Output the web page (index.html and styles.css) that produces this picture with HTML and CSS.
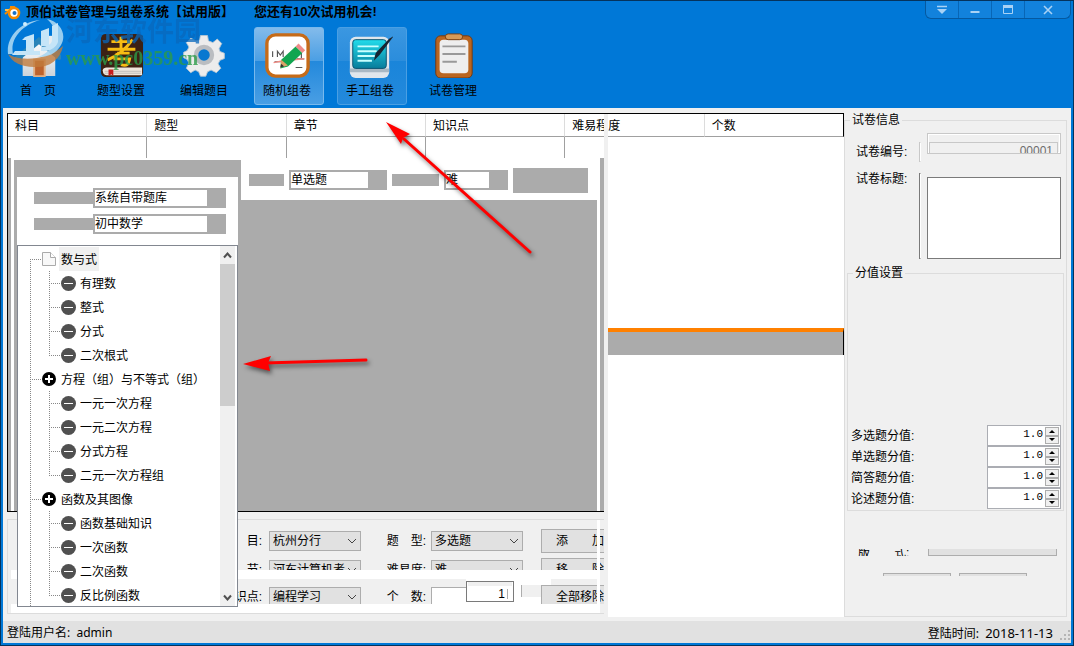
FILE: index.html
```html
<!DOCTYPE html>
<html lang="zh-CN">
<head>
<meta charset="utf-8">
<title>顶伯试卷管理与组卷系统</title>
<link rel="stylesheet" href="styles.css">
</head>
<body>
<div class="window">
  <header class="top">
    <div class="titlebar">
      <svg class="app-icon" width="17" height="16" viewBox="0 0 17 16"><path d="M1 10 9 3 6 3" fill="none" stroke="#f58a00" stroke-width="2"/><path d="M1 6h7" stroke="#ffc04a" stroke-width="2"/><circle cx="10" cy="9" r="5" fill="#fff" stroke="#f58a00" stroke-width="2.6"/><circle cx="10.500" cy="9" r="2" fill="#1671c9"/></svg>
      <h1>顶伯试卷管理与组卷系统【试用版】</h1>
      <p class="trial">您还有10次试用机会!</p>
      <div class="controls">
        <button aria-label="菜单"><svg width="12" height="10" viewBox="0 0 12 10"><path d="M1 1.500h10" stroke="#a9d2f5" stroke-width="1.500"/><path d="M1 4h10L6 9z" fill="#a9d2f5"/></svg></button>
        <button aria-label="最小化"><svg width="12" height="10" viewBox="0 0 12 10"><path d="M1.500 7h9" stroke="#a9d2f5" stroke-width="2"/></svg></button>
        <button aria-label="最大化"><svg width="12" height="10" viewBox="0 0 12 10"><path d="M1.500 1.500h9v7h-9z" fill="none" stroke="#a9d2f5"/><path d="M1 1.500h10" stroke="#a9d2f5" stroke-width="3"/></svg></button>
        <button class="close" aria-label="关闭"><svg width="12" height="10" viewBox="0 0 12 10"><path d="m2 1 8 8M10 1 2 9" stroke="#a9d2f5" stroke-width="1.600"/></svg></button>
      </div>
    </div>
    <nav class="toolbar">
      <button class="tool"><svg viewBox="0 0 48 48"><defs><linearGradient id="hw" x2="0" y2="1"><stop offset="0" stop-color="#fff"/><stop offset="1" stop-color="#ccd3da"/></linearGradient></defs><path d="M33 4h7v14h-7z" fill="#e8edf1"/><path d="M8 23 25 9l17 14v23H8z" fill="url(#hw)"/><path d="M3 27 25 9l21 17" fill="none" stroke="#2a84b8" stroke-width="6" stroke-linecap="round"/><path d="M20 29h11v17H20z" fill="#bd632c" stroke="#e1ae82" stroke-width="2"/></svg><span>首　页</span></button>
      <button class="tool"><svg viewBox="0 0 48 48"><rect x="3" y="2" width="44" height="45" rx="5" fill="#3c2114"/><path d="M5 40c0-2 2-3 4-3h37v8H9c-3 0-4-2-4-5z" fill="#eee6dc"/><path d="M7 41h38M7 43h38" stroke="#aaa" stroke-width=".7"/><path d="M11 39h5v7l-2-2-3 2z" fill="#c51d1d"/><path d="M14 10h20M24 5v13M10 18h29M36 8C29 18 20 25 10 29M20 22h13M20 22l-2 6h15c-1 6-3 8-9 6" fill="none" stroke="#f8bd13" stroke-width="3"/></svg><span>题型设置</span></button>
      <button class="tool"><svg viewBox="-2 -1 52 52"><path d="M20 3h8l1 6 5 2 5-4 5 5-3 6 1 3 5 2v6l-5 2-2 4 3 5-5 5-6-3-4 2-2 5h-6l-2-5-4-2-5 3-5-5 3-6-2-4-4-2v-6l4-2 2-4-3-5 5-5 6 3 4-1z" fill="#ececec" stroke="#b8c6d2"/><circle cx="24" cy="25" r="9" fill="#0878d0" stroke="#babdc1" stroke-width="5"/></svg><span>编辑题目</span></button>
      <button class="tool selected"><svg viewBox="0 0 48 48"><rect x="3" y="3" width="43" height="43" rx="9" fill="#fff" stroke="#c66b18" stroke-width="3.500"/><path d="M9 20v6M14 26v-6l3 4 3-4v6M39 22v5M11 31h8m15-3h8M33 37h7" stroke="#555" stroke-width="1.200" fill="none"/><path d="m10 32 10-2 22-2" stroke="#f38a83" stroke-width="1.500" fill="none"/><path d="m18 29 15-14 7 7-15 14-8 2z" fill="#12a550"/><path d="m33 15 3-3 7 7-3 3z" fill="#ef8b88"/><path d="m18 29 7 6-8 2z" fill="#dba268"/><path d="m18 33-1 4 4-1z" fill="#333"/></svg><span>随机组卷</span></button>
      <button class="tool hover"><svg viewBox="0 0 48 48"><defs><linearGradient id="pad" x2="0" y2="1"><stop offset="0" stop-color="#22dceb"/><stop offset="1" stop-color="#087c9b"/></linearGradient></defs><rect x="3" y="5" width="41" height="43" rx="6" fill="#dfe6ec"/><path d="M3 38h41v4H3z" fill="#a8b8c4"/><rect x="6" y="8" width="35" height="30" rx="3" fill="url(#pad)" stroke="#08526f"/><path d="M11 15h22M11 20h20M11 25h18M11 30h15" stroke="#c7ffff" stroke-width="2"/><path d="M49 4 34 24l-6 6 2-8L44 7z" fill="#172532"/></svg><span>手工组卷</span></button>
      <button class="tool"><svg viewBox="0 0 48 48"><rect x="6" y="4" width="38" height="44" rx="5" fill="#b96520" stroke="#713710"/><rect x="10" y="8" width="30" height="35" rx="4" fill="#eee"/><rect x="16" y="2" width="18" height="6" rx="3" fill="#d69a58" stroke="#793f12"/><path d="M13 15h24M13 23h24M13 31h15" stroke="#999" stroke-width="2"/></svg><span>试卷管理</span></button>
    </nav>
    <div class="watermark">
      <svg width="60" height="54" viewBox="0 0 60 54"><path d="M3 36c12 8 40 6 55-8C55 43 43 50 29 49 16 49 7 44 3 36z" fill="#c07a3c" opacity=".8"/><path d="M35 2C14 4 1 20 3 36h5C5 22 15 8 35 2zM42 1c14 3 20 16 14 26-5 9-13 12-23 12C49 34 58 15 42 1z" fill="#a9d6f2" opacity=".9"/><path d="m20 19 9-3v17h6v4H7l3-4h11V22h-4zM36 13l8-3v18h-8zM47 8l6-3v19c-2 6-9 10-17 9v-4c6 0 11-3 11-7z" fill="#c5e5f8"/><circle cx="20" cy="6" r="2" fill="#cdeeff"/></svg>
      <div class="mark-text"><strong>河东软件园</strong><em>www.pc0359.cn</em></div>
    </div>
  </header>

  <main class="main">
    <section class="workspace">
      <table class="papers">
        <thead><tr><th>科目</th><th>题型</th><th>章节</th><th>知识点</th><th>难易程度</th><th>个数</th></tr></thead>
        <tbody><tr><td></td><td></td><td></td><td></td><td></td><td></td></tr></tbody>
      </table>
      <div class="left">
        <div class="canvas">
          <div class="filters">
            <label class="block b35" for="kind"></label>
            <select class="flat w98" id="kind"><option>单选题</option></select>
            <label class="block b47" for="level"></label>
            <select class="flat w64" id="level"><option>难</option></select>
            <button class="block search" aria-label="查询"></button>
          </div>
        </div>
        <form class="pick-form">
          <div class="line">
            <label for="subject">科　目:</label><span class="pick"><select id="subject"><option>杭州分行</option></select><svg width="10" height="6" viewBox="0 0 10 6"><path d="m1 1 4 4 4-4"/></svg></span>
            <label for="type">题　型:</label><span class="pick second"><select id="type"><option>多选题</option></select><svg width="10" height="6" viewBox="0 0 10 6"><path d="m1 1 4 4 4-4"/></svg></span>
            <button type="button">添　　加</button>
          </div>
          <div class="line cut">
            <label for="chapter">章　节:</label><span class="pick"><select id="chapter"><option>河东计算机考</option></select><svg width="10" height="6" viewBox="0 0 10 6"><path d="m1 1 4 4 4-4"/></svg></span>
            <label for="hard">难易度:</label><span class="pick second"><select id="hard"><option>难</option></select><svg width="10" height="6" viewBox="0 0 10 6"><path d="m1 1 4 4 4-4"/></svg></span>
            <button type="button">移　　除</button>
          </div>
          <div class="band"></div>
          <div class="line last">
            <label for="point">知识点:</label><span class="pick"><select id="point"><option>编程学习</option></select><svg width="10" height="6" viewBox="0 0 10 6"><path d="m1 1 4 4 4-4"/></svg></span>
            <label for="count">个　数:</label><span class="count"><i class="count-edge"></i><span class="patch"><input id="count" value="1"><i class="stub"></i></span></span>
            <button type="button">全部移除</button>
          </div>
          <div class="band"></div>
        </form>
      </div>
      <div class="middle"><div class="orange"></div></div>
      <div class="splitter"></div>

      <aside class="panel">
        <div class="panel-head"></div>
        <div class="fields">
          <div><label class="block" for="bank"></label><select class="flat" id="bank"><option>系统自带题库</option></select></div>
          <div><label class="block" for="course"></label><select class="flat" id="course"><option>初中数学</option></select></div>
        </div>
        <div class="tree">
          <ul>
            <li class="root first"><i class="rail"></i><svg width="14" height="16" viewBox="0 0 14 16"><path d="M.5 1.500h8l5 5v8H.5z" fill="#f8f8f8" stroke="#aaa"/><path d="M8.500 1.500v5h5" fill="#fff" stroke="#aaa"/></svg><span class="active">数与式</span></li>
            <li><i class="rail"></i><i class="branch"></i><b class="minus"></b><span>有理数</span></li>
            <li><i class="rail"></i><i class="branch"></i><b class="minus"></b><span>整式</span></li>
            <li><i class="rail"></i><i class="branch"></i><b class="minus"></b><span>分式</span></li>
            <li class="end"><i class="rail"></i><i class="branch"></i><b class="minus"></b><span>二次根式</span></li>
            <li class="root"><i class="rail"></i><b class="plus"></b><span>方程（组）与不等式（组）</span></li>
            <li><i class="rail"></i><i class="branch"></i><b class="minus"></b><span>一元一次方程</span></li>
            <li><i class="rail"></i><i class="branch"></i><b class="minus"></b><span>一元二次方程</span></li>
            <li><i class="rail"></i><i class="branch"></i><b class="minus"></b><span>分式方程</span></li>
            <li class="end"><i class="rail"></i><i class="branch"></i><b class="minus"></b><span>二元一次方程组</span></li>
            <li class="root"><i class="rail"></i><b class="plus"></b><span>函数及其图像</span></li>
            <li><i class="rail"></i><i class="branch"></i><b class="minus"></b><span>函数基础知识</span></li>
            <li><i class="rail"></i><i class="branch"></i><b class="minus"></b><span>一次函数</span></li>
            <li><i class="rail"></i><i class="branch"></i><b class="minus"></b><span>二次函数</span></li>
            <li class="end"><i class="rail"></i><i class="branch"></i><b class="minus"></b><span>反比例函数</span></li>
          </ul>
          <div class="scroll">
            <button aria-label="向上"><svg width="9" height="7" viewBox="0 0 9 7"><path d="m1 5.500 3.500-4L8 5.500" fill="none" stroke="#505050" stroke-width="2"/></svg></button>
            <div class="thumb"></div>
            <button aria-label="向下"><svg width="9" height="7" viewBox="0 0 9 7"><path d="m1 1.500 3.500 4L8 1.500" fill="none" stroke="#505050" stroke-width="2"/></svg></button>
          </div>
        </div>
      </aside>
    </section>

    <fieldset class="info">
      <legend>试卷信息</legend>
      <div class="info-row number"><label for="no">试卷编号:</label><i class="tick"></i><div class="no-box"><input id="no" value="00001" readonly></div></div>
      <div class="info-row heading"><label for="name">试卷标题:</label><i class="tick"></i><textarea id="name"></textarea></div>
      <fieldset class="scores">
        <legend>分值设置</legend>
        <div class="score"><label for="s1">多选题分值:</label><div class="spin"><input id="s1" value="1.0"><span><button aria-label="增加"></button><button class="down" aria-label="减少"></button></span></div></div>
        <div class="score"><label for="s2">单选题分值:</label><div class="spin"><input id="s2" value="1.0"><span><button aria-label="增加"></button><button class="down" aria-label="减少"></button></span></div></div>
        <div class="score"><label for="s3">简答题分值:</label><div class="spin"><input id="s3" value="1.0"><span><button aria-label="增加"></button><button class="down" aria-label="减少"></button></span></div></div>
        <div class="score"><label for="s4">论述题分值:</label><div class="spin"><input id="s4" value="1.0"><span><button aria-label="增加"></button><button class="down" aria-label="减少"></button></span></div></div>
      </fieldset>
      <div class="format"><label for="format">版　　式:</label><select id="format"><option></option></select></div>
      <div class="actions"><button aria-label="保存"></button><button aria-label="导出"></button></div>
    </fieldset>
  </main>

  <footer class="status"><span>登陆用户名:&nbsp; admin</span><span>登陆时间:&nbsp; <time>2018-11-13</time></span>
    <svg width="12" height="12" viewBox="0 0 12 12"><path d="M9 1h2v2H9zM5 5h2v2H5zM9 5h2v2H9zM1 9h2v2H1zM5 9h2v2H5zM9 9h2v2H9z" fill="#b5b5b5"/></svg>
  </footer>

  <svg class="arrows" width="540" height="390" viewBox="0 0 540 390">
    <g class="arrow-shadow"><path d="m404 139 126 113" stroke="#f00" stroke-width="3" stroke-linecap="round"/><path d="m386 122 24 12-7 4-2 6z" fill="#f00"/><path d="m265 363 101-3" stroke="#f00" stroke-width="3" stroke-linecap="round"/><path d="m243 364 28-8-3 7 2 8z" fill="#f00"/></g>
  </svg>
</div>
</body>
</html>
```
FILE: styles.css
```css
* { box-sizing: border-box; }
body { margin: 0; font: 12px/14px "Liberation Sans", "Noto Sans CJK SC", sans-serif; color: #000; }
h1, p, ul { margin: 0; padding: 0; }
button, input, select, textarea { font: inherit; color: inherit; margin: 0; padding: 0; border-radius: 0; min-width: 0; }
select { appearance: none; }
.window { position: relative; display: flex; flex-direction: column; min-height: 100vh; background: #0078d7; border: 1px solid #05335c; padding: 0 2px 2px; }

.top { position: relative; height: 107px; }
.titlebar { display: flex; height: 26px; font-size: 13px; font-weight: bold; padding-left: 1px; }
.app-icon { margin-top: 3px; }
.titlebar h1, .trial { font-size: 13px; line-height: 22px; white-space: nowrap; }
.titlebar h1 { margin-left: 5px; }
.trial { margin-left: 20px; }
.controls { display: flex; margin-left: auto; width: 146px; height: 18px; border: 1px solid #0559a0; border-top: 0; border-radius: 0 0 6px 6px; background: #1282dc; }
.controls button { width: 33px; display: grid; place-items: center; border: 0; border-right: 1px solid #0866b6; background: none; }
.controls .close { flex: 1; border: 0; }
.toolbar { display: flex; gap: 13px; padding-left: 2px; }
.tool { width: 70px; height: 78px; padding: 4px 4px 0 0; display: flex; flex-direction: column; align-items: center; gap: 6px; border: 1px solid transparent; border-radius: 3px; background: none; white-space: nowrap; }
.tool svg { flex: none; width: 46px; height: 46px; }
.tool.selected { border-color: #78b9ed; background: linear-gradient(#83bbeb, #4b9fe4 43%, #2389dc 44%, #499ee4); }
.tool.hover { border-color: #4a9fe3; background: linear-gradient(#3b97e1, #2b8ddc 43%, #1a85da 44%, #2389dc); }
.watermark { position: absolute; left: 2px; top: 17px; display: flex; pointer-events: none; }
.mark-text { display: flex; flex-direction: column; gap: 2px; padding-left: 1px; }
.mark-text strong { font-size: 27px; line-height: 28px; color: #0868bd; opacity: .75; }
.mark-text em { font: bold 20px/20px "Liberation Serif", serif; color: #2c9b48; opacity: .8; }

.main { flex: 1; display: flex; background: #f0f0f0; padding: 5px 4px 4px; }
.workspace { position: relative; flex: 1; min-width: 0; display: grid; grid-template-columns: minmax(0, 1fr) 236px; grid-template-rows: auto 1fr; column-gap: 4px; }
.papers { grid-column: 1 / 3; width: 100%; table-layout: fixed; border-collapse: separate; border-spacing: 0; background: #fff; border: solid #000; border-width: 1px 0 0 1px; }
.papers th { height: 23px; padding: 2px 0 0 7px; text-align: left; font-weight: normal; border-right: 1px solid #dcdcdc; border-bottom: 1px solid #a0a0a0; }
.papers td { height: 21px; padding: 0; border-right: 1px solid #a0a0a0; }
.papers th:last-child { border-right-color: #000; }
.papers td:nth-child(n+6) { border-right: 0; }
.papers td:nth-child(5) { border-right: 0; }
.left { display: flex; flex-direction: column; min-width: 0; overflow: hidden; }
.canvas { flex: 1; border: solid #000; border-width: 0 0 1px 1px; background: linear-gradient(90deg, #ababab 3px, #fff 3px, #fff 6px, #ababab 6px, #ababab calc(100% - 7px), #fff calc(100% - 7px), #fff calc(100% - 4px), #ababab calc(100% - 4px)); }
.filters { height: 42px; margin: 0 4px 0 3px; padding: 2px 0 0 238px; background: #fff; display: flex; align-items: center; gap: 5px; }
.block { background: #ababab; height: 12px; border: 0; }
.flat { height: 20px; border: 2px solid #ababab; border-right-width: 19px; background: #fff; }
.b35 { width: 35px; }
.b47 { width: 47px; }
.w98 { width: 98px; }
.w64 { width: 64px; }
.search { width: 75px; height: 25px; }

.pick-form { position: relative; margin: 7px 0 3px; border: 1px solid #dcdcdc; border-right: 0; padding-top: 9px; }
.pick-form::after { content: ""; position: absolute; top: 0; bottom: 0; right: 4px; width: 3px; background: #fff; }
.line { display: grid; grid-template-columns: 254px 99px 65px 97px 96px; align-items: center; height: 24px; }
.line label { text-align: right; white-space: nowrap; }
.pick { display: grid; align-items: center; padding-left: 7px; }
.second { padding-left: 5px; }
.pick select { grid-area: 1 / 1; height: 20px; width: 100%; padding-left: 3px; background: #e1e1e1; border: 1px solid #adadad; }
.pick svg { grid-area: 1 / 1; justify-self: end; margin-right: 4px; fill: none; stroke: #444; pointer-events: none; }
.line button { height: 24px; margin-left: 18px; background: #e1e1e1; border: 1px solid #adadad; white-space: nowrap; }
.cut { margin-top: 5px; height: 12px; overflow: hidden; align-items: start; }
.cut label, .last label { line-height: 24px; }
.cut .pick, .last .pick { padding-top: 2px; }
.band { height: 9px; background: #fff; margin: 0 4px 0 3px; }
.last { height: 25px; padding-top: 6px; overflow: hidden; align-items: start; }
.count { display: flex; align-items: flex-start; height: 25px; margin-top: -6px; padding-left: 5px; }
.count-edge { flex: none; width: 35px; height: 17px; margin-top: 8px; background: #fff; border: solid #adadad; border-width: 1px 0 0 1px; }
.patch { flex: none; width: 85px; height: 25px; background: #fff; display: flex; gap: 7px; align-items: flex-start; padding-top: 2px; }
.count input { width: 48px; height: 21px; border: 1px solid #7a7a7a; background: linear-gradient(#adadad, #adadad) right 5px bottom 2px / 1px 10px no-repeat, linear-gradient(#f0f0f0, #f0f0f0) top / 44px 4px no-repeat #fff; text-align: right; padding: 5px 8px 0 0; }
.stub { width: 23px; height: 12px; margin-top: 4px; background: #f0f0f0; border: solid #adadad; border-width: 0 1px; }

.middle { background: #fff; display: flex; flex-direction: column; }
.orange { margin-top: 170px; height: 27px; background: #ababab; border-top: 4px solid #ff8000; border-right: 1px solid #000; }
.splitter { position: absolute; top: 1px; bottom: 0; right: 236px; width: 4px; background: #f0f0f0; }

.panel { position: absolute; left: 7px; top: 47px; bottom: 10px; width: 227px; display: flex; flex-direction: column; }
.panel-head { height: 17px; background: #ababab; }
.fields { height: 68px; border: solid #ababab; border-width: 0 3px; background: #fff; padding: 11px 12px 0 17px; display: flex; flex-direction: column; gap: 6px; }
.fields div { display: flex; align-items: center; }
.fields .block { width: 59px; }
.fields .flat { flex: 1; }
.tree { flex: 1; margin: 0 3px; border: 1px solid #828790; background: #fff; display: flex; justify-content: space-between; min-height: 0; padding-right: 2px; }
.tree ul { list-style: none; padding: 1px 0 0 12px; }
.tree li { display: flex; align-items: center; height: 24px; white-space: nowrap; }
.tree li svg { margin-right: 3px; }
.tree li span { padding: 6px 2px 4px; }
.active { background: #f0f0f0; }
.rail, .branch { height: 24px; --v: repeating-linear-gradient(#888 0 1px, transparent 1px 2px); --h: repeating-linear-gradient(90deg, #888 0 1px, transparent 1px 2px); background: var(--v) 0 0 / 1px 100% no-repeat; }
.rail { width: 19px; }
.root .rail { width: 12px; background: var(--v) 0 0 / 1px 100% no-repeat, var(--h) 0 12px / 100% 1px no-repeat; }
.first .rail { background: var(--v) 0 12px / 1px 12px no-repeat, var(--h) 0 12px / 100% 1px no-repeat; }
.branch { width: 12px; background: var(--v) 0 0 / 1px 100% no-repeat, var(--h) 0 12px / 100% 1px no-repeat; }
.end .branch { background: var(--v) 0 0 / 1px 12px no-repeat, var(--h) 0 12px / 100% 1px no-repeat; }
.minus, .plus { width: 15px; height: 15px; border-radius: 50%; margin-right: 2px; background: linear-gradient(#fff, #fff) center / 9px 1px no-repeat #505050; }
.plus { width: 14px; height: 14px; margin-right: 3px; background: linear-gradient(#fff, #fff) center / 8px 2px no-repeat, linear-gradient(#fff, #fff) center / 2px 8px no-repeat #000; }
.scroll { width: 15px; background: #f0f0f0; display: flex; flex-direction: column; }
.scroll button { height: 18px; border: 0; background: none; display: grid; place-items: center; }
.thumb { height: 142px; background: #cdcdcd; margin-bottom: auto; }

.info { width: 223px; margin: 0; padding: 0 2px; border: 1px solid #dcdcdc; }
.info legend { margin-left: 3px; padding: 0 2px; }
.info-row { display: grid; grid-template-columns: 72px 2px 1fr; padding-right: 3px; }
.info-row label { padding-left: 9px; }
.number { margin-top: 6px; height: 30px; }
.number label { padding-top: 12px; }
.tick { border: 1px solid #c8c8c8; border-right-color: #fff; margin: 9px 0 1px; }
.no-box { margin-left: 6px; height: 21px; border: 1px solid #c8c8c8; box-shadow: inset 0 0 0 1px #fff; padding: 8px 2px 0 1px; overflow: hidden; }
.no-box input { width: 100%; height: 18px; border: 1px solid #c8c8c8; background: #f0f0f0; color: #6d6d6d; text-align: right; padding-right: 4px; }
.heading label { padding-top: 9px; }
.heading .tick { margin: 10px 0 0; border-color: #7a7a7a; border-right-color: #fff; }
.heading textarea { display: block; margin: 14px 0 0 6px; height: 82px; resize: none; border: 1px solid #7a7a7a; background: #fff; }
.scores { margin: 7px 0 0; border: 1px solid #dcdcdc; padding: 0 2px 1px 1px; height: 245px; display: flex; flex-direction: column; justify-content: flex-end; min-width: 0; }
.scores legend { margin-left: 4px; }
.score { display: flex; justify-content: space-between; align-items: center; height: 21px; padding-left: 2px; }
.spin { width: 74px; height: 21px; display: flex; border: 1px solid #abadb3; background: #fff; padding-right: 1px; }
.spin input { flex: 1; border: 0; background: none; text-align: right; padding: 0 2px 3px 0; font-family: "Liberation Mono", monospace; font-size: 11px; }
.spin span { width: 14px; display: flex; flex-direction: column; padding: 1px 0; }
.spin button { flex: 1; display: grid; place-items: center; border: 1px solid #adadad; background: #f0f0f0; }
.spin button::before { content: ""; border: 3px solid transparent; border-top: 0; border-bottom-color: #000; }
.spin .down::before { border: 3px solid transparent; border-bottom: 0; border-top-color: #000; }
.format { margin-top: 38px; height: 7px; overflow: hidden; display: flex; align-items: flex-end; justify-content: space-between; padding: 0 7px 0 11px; }
.format label { line-height: 14px; height: 10px; }
.format select { width: 129px; height: 20px; background: #e1e1e1; border: 1px solid #adadad; }
.actions { margin-top: 17px; height: 3px; overflow: hidden; display: flex; gap: 8px; padding-left: 36px; }
.actions button { width: 68px; height: 24px; border: 1px solid #adadad; background: #e1e1e1; }

.status { display: flex; align-items: center; height: 22px; background: #e1e1e1; padding: 2px 0 0 4px; font-family: "Noto Sans", "Noto Sans CJK SC", sans-serif; }
.status span + span { margin-left: auto; }
.status time { font-size: 13px; }
.status svg { margin: 4px 0 0 6px; }
.arrows { position: absolute; left: -1px; top: -1px; pointer-events: none; }
.arrow-shadow { filter: drop-shadow(2px 3px 2px rgba(0, 0, 0, .5)); }
```
